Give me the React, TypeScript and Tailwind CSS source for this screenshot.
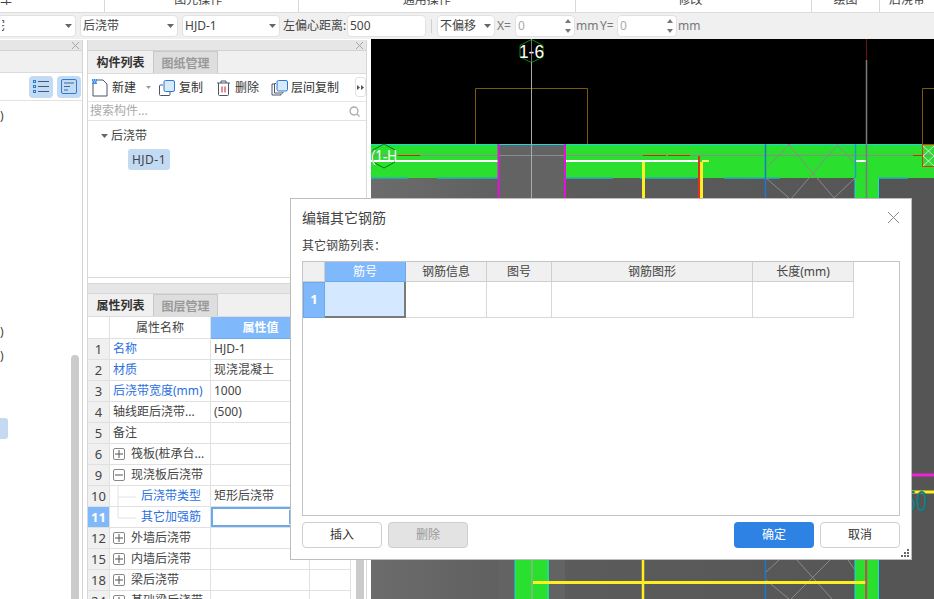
import React from 'react';

const ribbon = [
  { w: 'w-[105px]', label: '车', cls: 'text-left' },
  { w: 'w-[194px]', label: '图元操作 ·', cls: 'text-center' },
  { w: 'w-[277px]', label: '通用操作 ·', cls: 'text-center pr-[14px]' },
  { w: 'w-[236px]', label: '修改   ·', cls: 'text-center' },
  { w: 'w-[68px]', label: '绘图', cls: 'text-center' },
  { w: 'flex-1', label: '后浇带', cls: 'text-center' },
];

function Caret({ className = '' }: { className?: string }) {
  return (
    <svg width="7" height="4" viewBox="0 0 7 4" className={className}>
      <path d="M0 0h7L3.5 4z" fill="#666" />
    </svg>
  );
}

function Select({ w, children, cut }: { w: string; children: React.ReactNode; cut?: boolean }) {
  return (
    <div className={`${w} h-[22px] bg-white border border-[#e2e2e2] ${cut ? 'rounded-r-[4px] border-l-0' : 'rounded-[4px]'} flex items-center justify-between pl-[2px] pr-[3px] shrink-0`}>
      <span className="whitespace-nowrap overflow-hidden">{children}</span>
      <Caret />
    </div>
  );
}

function Spin() {
  return (
    <div className="w-[60px] h-[22px] bg-white border border-[#e2e2e2] rounded-[4px] flex items-center justify-between pl-[2px] pr-[3px] shrink-0">
      <span className="text-[#aaa]">0</span>
      <svg width="6" height="14" viewBox="0 0 6 14">
        <path d="M0 4l3-4 3 4zM0 10l3 4 3-4z" fill="#777" />
      </svg>
    </div>
  );
}

function TopBars() {
  return (
    <>
      <div className="h-[13px] bg-white border-b border-[#dcdcdc] flex overflow-hidden shrink-0">
        {ribbon.map((r, i) => (
          <div key={i} className={`${r.w} ${r.cls} h-[12px] border-r border-[#d8d8d8] overflow-hidden last:border-r-0`}>
            <div className="text-[12px] leading-[12px] mt-[-6px] text-[#444] whitespace-nowrap">{r.label}</div>
          </div>
        ))}
      </div>
      <div className="h-[26px] bg-[#f0f0f0] flex items-center text-[12px] text-[#444] shrink-0">
        <div className="w-[80px] shrink-0 pr-[4px]">
          <Select w="w-[76px]" cut>
            <span className="ml-[-9px]">宅</span>
          </Select>
        </div>
        <Select w="w-[98px]">后浇带</Select>
        <div className="w-[4px] shrink-0" />
        <Select w="w-[98px]">HJD-1</Select>
        <span className="ml-[3px] w-[64px] shrink-0 whitespace-nowrap">左偏心距离:</span>
        <div className="w-[79px] h-[22px] bg-white border border-[#e2e2e2] rounded-[4px] flex items-center shrink-0 pl-[2px]">500</div>
        <div className="w-px h-[14px] bg-[#cfcfcf] ml-[5px] mr-[5px] shrink-0" />
        <Select w="w-[58px]">不偏移</Select>
        <span className="ml-[2px] w-[18px] text-[#777] shrink-0">X=</span>
        <Spin />
        <span className="ml-[1px] w-[24px] text-[#777] shrink-0">mm</span>
        <span className="w-[17px] text-[#777] shrink-0">Y=</span>
        <Spin />
        <span className="ml-[1px] text-[#777]">mm</span>
      </div>
    </>
  );
}

function PanelTabs({ a, b }: { a: string; b: string }) {
  return (
    <div className="h-[23px] flex bg-[#f0f0f0] border-b border-[#dcdcdc] shrink-0 text-[12px] leading-[24px]">
      <div className="w-[65px] text-center font-bold text-[#333]">{a}</div>
      <div className="w-[65px] text-center font-bold text-[#999] bg-[#dedede] border border-[#c8c8c8] border-b-0">{b}</div>
    </div>
  );
}

function CloseBar() {
  return (
    <div className="h-[11px] bg-[#e6e6e6] border-b border-[#d2d2d2] flex justify-end items-center pr-[3px] shrink-0">
      <svg width="7" height="7" viewBox="0 0 7 7">
        <path d="M0 0l7 7M7 0L0 7" stroke="#a5a5a5" strokeWidth="1" />
      </svg>
    </div>
  );
}

function LeftPanel() {
  return (
    <div className="w-[83px] border-r border-[#d4d4d4] shrink-0 relative overflow-hidden">
      <CloseBar />
      <div className="h-[22px] bg-[#f0f0f0] border-b border-[#dcdcdc]" />
      <div className="h-[28px] border-b border-[#e2e2e2] flex justify-end gap-[4px] items-center pr-[1px]">
        <div className="w-[24px] h-[22px] bg-[#c3daf3] rounded-[4px] flex items-center justify-center">
          <svg width="16" height="13" viewBox="0 0 16 13" fill="none">
            <rect x="0.5" y="0.5" width="2" height="2" stroke="#2a7ad6" />
            <rect x="0.5" y="5.5" width="2" height="2" stroke="#2a7ad6" />
            <rect x="0.5" y="10.5" width="2" height="2" stroke="#2a7ad6" />
            <path d="M5 1.5h11M5 6.5h11M5 11.5h11" stroke="#3c5a80" />
          </svg>
        </div>
        <div className="w-[24px] h-[22px] bg-[#c3daf3] rounded-[4px] flex items-center justify-center">
          <svg width="16" height="15" viewBox="0 0 16 15" fill="none">
            <rect x="0.5" y="0.5" width="15" height="14" rx="1.5" stroke="#2a7ad6" />
            <path d="M3 4h10M3 7.5h6M3 11h4" stroke="#3c6a9c" />
          </svg>
        </div>
      </div>
      {/* scrolled content, only the right edge of it shows */}
      <div className="absolute left-0 top-[70px] text-[12px] text-[#444] leading-none">)</div>
      <div className="absolute left-0 top-[286px] text-[12px] text-[#444] leading-none">)</div>
      <div className="absolute left-0 top-[310px] text-[12px] text-[#444] leading-none">)</div>
      <div className="absolute left-0 top-[378px] w-[8px] h-[21px] bg-[#c5daf2] rounded-r-[3px]" />
      <div className="absolute left-[71px] top-[315px] w-[8px] h-[300px] bg-[#cbcbcb] rounded-t-[4px]" />
    </div>
  );
}

function ToolIcon({ kind }: { kind: 'new' | 'copy' | 'trash' | 'floor' }) {
  if (kind === 'new') {
    return (
      <svg width="16" height="18" viewBox="0 0 16 18" fill="none">
        <path d="M1 5v12h14V5l-4-4H5" stroke="#4a5568" strokeWidth="1" />
        <rect x="0" y="0" width="5" height="5" fill="#3f8fe8" />
        <path d="M1 1h1M3 1h1M0 3h1M2 3h1M4 3h1" stroke="#fff" strokeWidth="0.8" />
      </svg>
    );
  }
  if (kind === 'copy') {
    return (
      <svg width="16" height="16" viewBox="0 0 16 16" fill="none">
        <path d="M4 5H1.5A1 1 0 0 0 .5 6v8.500a1 1 0 0 0 1 1H10a1 1 0 0 0 1-1V12" stroke="#4a5568" />
        <rect x="5" y="0.500" width="10.500" height="11" rx="1.500" fill="#d8e9fb" stroke="#2a7ad6" />
      </svg>
    );
  }
  if (kind === 'trash') {
    return (
      <svg width="15" height="16" viewBox="0 0 15 16" fill="none">
        <path d="M1 3h13M5 3V1h5v2" stroke="#4a5568" />
        <path d="M2.500 3v11.500a1 1 0 0 0 1 1h8a1 1 0 0 0 1-1V3" stroke="#4a5568" />
        <path d="M6 6.500v6M9 6.500v6" stroke="#d02020" />
      </svg>
    );
  }
  return (
    <svg width="17" height="16" viewBox="0 0 17 16" fill="none">
      <path d="M3 4H1v11h9v-1M5 3.500H3.500v9.500H12v-1" stroke="#4a5568" />
      <rect x="6" y="0.500" width="10.500" height="10.500" rx="1.500" fill="#d8e9fb" stroke="#2a7ad6" />
    </svg>
  );
}

function ComponentList() {
  return (
    <div className="h-[238px] border-b border-[#d8d8d8] flex flex-col shrink-0">
      <CloseBar />
      <PanelTabs a="构件列表" b="图纸管理" />
      <div className="h-[28px] border-b border-[#e6e6e6] flex items-center text-[12px] text-[#333] shrink-0 relative">
        <div className="ml-[4px] flex items-center gap-[4px] w-[67px]">
          <ToolIcon kind="new" />
          <span>新建</span>
          <svg width="5" height="3" viewBox="0 0 5 3" className="ml-[6px]">
            <path d="M0 0h5L2.500 3z" fill="#999" />
          </svg>
        </div>
        <div className="flex items-center gap-[4px] w-[57px]">
          <ToolIcon kind="copy" />
          <span>复制</span>
        </div>
        <div className="flex items-center gap-[4px] w-[55px]">
          <ToolIcon kind="trash" />
          <span>删除</span>
        </div>
        <div className="flex items-center gap-[3px]">
          <ToolIcon kind="floor" />
          <span>层间复制</span>
        </div>
        <div className="absolute right-0 top-[3px] w-[11px] h-[20px] border border-[#e2e2e2] rounded-[3px] flex items-center justify-center">
          <svg width="7" height="5" viewBox="0 0 7 5">
            <path d="M0 0l3 2.500L0 5zM4 0l3 2.500L4 5z" fill="#555" />
          </svg>
        </div>
      </div>
      <div className="h-[19px] border-b border-[#e2e2e2] flex items-center justify-between pl-[2px] pr-[6px] text-[12px] text-[#aaa] shrink-0">
        <span>搜索构件...</span>
        <svg width="11" height="11" viewBox="0 0 11 11" fill="none">
          <circle cx="5" cy="5" r="4" stroke="#aaa" strokeWidth="1.300" />
          <path d="M8 8l2.500 2.500" stroke="#aaa" strokeWidth="1.300" />
        </svg>
      </div>
      <div className="pl-[13px] pt-[6px] text-[12px] text-[#444]">
        <div className="flex items-center h-[18px] gap-[3px]">
          <Caret />
          <span>后浇带</span>
        </div>
        <div className="ml-[27px] mt-[4px] w-[42px] h-[21px] bg-[#c3daf3] rounded-[3px] flex items-center justify-center tracking-[0.5px]">HJD-1</div>
      </div>
    </div>
  );
}

type Row = { n: number; name: string; value?: string; blue?: boolean; expand?: '+' | '-'; child?: boolean; active?: boolean };

const rows: Row[] = [
  { n: 1, name: '名称', value: 'HJD-1', blue: true },
  { n: 2, name: '材质', value: '现浇混凝土', blue: true },
  { n: 3, name: '后浇带宽度(mm)', value: '1000', blue: true },
  { n: 4, name: '轴线距后浇带...', value: '(500)' },
  { n: 5, name: '备注' },
  { n: 6, name: '筏板(桩承台...', expand: '+' },
  { n: 9, name: '现浇板后浇带', expand: '-' },
  { n: 10, name: '后浇带类型', value: '矩形后浇带', blue: true, child: true },
  { n: 11, name: '其它加强筋', blue: true, child: true, active: true },
  { n: 12, name: '外墙后浇带', expand: '+' },
  { n: 15, name: '内墙后浇带', expand: '+' },
  { n: 18, name: '梁后浇带', expand: '+' },
  { n: 24, name: '基础梁后浇带', expand: '+' },
];

const rowGrid = 'grid grid-cols-[22px_101px_99px_41px] w-[263px]';

function PropRow({ r }: { r: Row }) {
  return (
    <div className={`${rowGrid} h-[21px] border-b border-[#e0e0e0] text-[12px] text-[#444] leading-[20px] shrink-0`}>
      <div className={`text-center border-r border-[#e0e0e0] text-[13px] ${r.active ? 'bg-[#7fb9fb] text-white font-bold' : 'bg-[#f0f0f0]'}`}>{r.n}</div>
      <div className="border-r border-[#e0e0e0] flex items-center pl-[3px] relative whitespace-nowrap overflow-hidden">
        {r.expand && (
          <span className="w-[12px] h-[12px] border border-[#888] rounded-[2px] flex items-center justify-center mr-[6px] shrink-0">
            <svg width="8" height="8" viewBox="0 0 8 8">
              <path d={r.expand === '+' ? 'M0 4h8M4 0v8' : 'M0 4h8'} stroke="#555" />
            </svg>
          </span>
        )}
        {r.child && (
          <svg width="25" height="21" viewBox="0 0 25 21" className="shrink-0 mr-[3px]">
            <path d={r.active ? 'M5 0v11h18' : 'M5 0v21M5 11h18'} stroke="#e2e2e2" fill="none" />
          </svg>
        )}
        <span className={r.blue ? 'text-[#2b6fe0]' : ''}>{r.name}</span>
      </div>
      {r.active ? (
        <div className="border-2 border-[#6aa9ee] bg-white relative">
          <div className="absolute left-[76px] top-[1px] w-[2px] h-[14px] bg-[#6aa9ee]" />
        </div>
      ) : (
        <div className="border-r border-[#e0e0e0] pl-[3px] whitespace-nowrap">{r.value}</div>
      )}
      <div className="border-r border-[#e0e0e0]" />
    </div>
  );
}

function PropertyList() {
  return (
    <div className="flex-1 flex flex-col overflow-hidden mt-[5px] relative">
      <div className="h-[11px] bg-[#e6e6e6] border-y border-[#d8d8d8] shrink-0" />
      <PanelTabs a="属性列表" b="图层管理" />
      <div className={`${rowGrid} h-[22px] border-b border-[#e0e0e0] text-[12px] text-[#444] leading-[21px] shrink-0`}>
        <div className="border-r border-[#e0e0e0]" />
        <div className="border-r border-[#e0e0e0] text-center">属性名称</div>
        <div className="bg-[#7fb9fb] text-white text-center font-bold border-b border-[#6aa9ee]">属性值</div>
        <div />
      </div>
      {rows.map((r) => (
        <PropRow key={r.n} r={r} />
      ))}
      <div className="absolute left-[268px] top-[60px] w-[8px] h-[300px] bg-[#cbcbcb]" />
    </div>
  );
}

function Canvas() {
  return (
    <svg viewBox="371 39 563 560" width="563" height="560" className="block" fontFamily="'Liberation Sans', sans-serif">
      <defs>
        <linearGradient id="floor" x1="0" x2="1" y1="0" y2="0">
          <stop offset="0" stopColor="#6c6c6c" />
          <stop offset="0.3" stopColor="#5c5c5c" />
          <stop offset="1" stopColor="#555" />
        </linearGradient>
      </defs>
      <rect x="371" y="39" width="563" height="105" fill="#000" />
      <rect x="371" y="178" width="563" height="421" fill="url(#floor)" />
      <rect x="371" y="144" width="563" height="34" fill="#2bdf2f" />
      <rect x="498" y="144" width="67" height="455" fill="#636363" />
      <rect x="515" y="560" width="34" height="39" fill="#2bdf2f" />
      <rect x="855" y="178" width="23" height="421" fill="#2bdf2f" />
      <rect x="878" y="178" width="56" height="421" fill="#555" />

      <path d="M475.500 144V88.500H587.500V144M922.500 144V88.500H934" stroke="#7a5a10" fill="none" />
      <path d="M371 144.500H934" stroke="#18d8e8" />
      <path d="M371 155.500H934" stroke="#8a8a8a" />
      <path d="M371 161H498M565 161H700M855 161H867" stroke="#fff" strokeWidth="2" />
      <path d="M398 155.500H420M643 155.500H666M668 155.500H690M913 155.500H922" stroke="#e02010" />
      <path d="M371 178H408M437 178H498M565 178H613M640 178H696M724 178H780M878 178H908" stroke="#1fb8b0" strokeWidth="1.500" />
      <path d="M498.500 144V199M565 144V199" stroke="#e014d8" strokeWidth="2" />
      <path d="M643.500 162V199M701.500 162V199" stroke="#ffee22" strokeWidth="3" />
      <path d="M699 156V199" stroke="#e03020" strokeWidth="2" />
      <path d="M702 161H709" stroke="#ffee66" strokeWidth="2" />
      <path d="M765.500 144V599" stroke="#1a7ad0" strokeWidth="1.500" />
      <path d="M855.500 144V178" stroke="#1aa0c0" strokeWidth="1.500" />
      <path d="M855 178V599M878.500 178V599" stroke="#18d8e8" />
      <path
        d="M788 144L835 199M838 144L791 199M766 168L790 144M838 146L855 163M766 178L789 198M855 178L834 198"
        stroke="#8a8a8a"
        fill="none"
      />
      <path d="M797 560L832 599M830 560L791 599M766 572L779 560M766 580L789 599M848 560L855 570" stroke="#8a8a8a" fill="none" />
      <path d="M866.500 39V60" stroke="#6a1010" />
      <path d="M866.500 60V599" stroke="#7a7a7a" strokeWidth="1.500" />
      <path d="M531.500 39V199" stroke="#aaa" />
      <path d="M531.500 39.500L543 45.500V57L531.500 62.500L520 57V45.500Z" stroke="#0a8a0a" fill="#000" />
      <text x="531.500" y="58" textAnchor="middle" fontSize="19" fill="#fff" textLength="25" lengthAdjust="spacingAndGlyphs">1-6</text>
      <path d="M531.500 39V63" stroke="#aaa" strokeOpacity="0.700" />
      <path d="M384 144L395 150V162L384 168L373 162V150Z" stroke="#0a7a0a" fill="none" />
      <text x="384" y="162" textAnchor="middle" fontSize="17" fill="#fff" textLength="26" lengthAdjust="spacingAndGlyphs">(1-H</text>

      <rect x="922.500" y="144.500" width="12" height="22" fill="none" stroke="#e83010" />
      <path d="M923 146l11 10M934 146l-11 10M923 156l11 10M934 156l-11 10" stroke="#ddd" />

      <path d="M515 560V599M548 560V599" stroke="#18d8e8" />
      <path d="M532 560V599" stroke="#aaa" />
      <path d="M533 582.500H866" stroke="#ffee22" strokeWidth="3" />
      <path d="M643 560V599" stroke="#ffee22" strokeWidth="2.500" />
      <path d="M866 560V599" stroke="#d04040" strokeWidth="1.500" />

      <path d="M912 475H934" stroke="#f020d8" strokeWidth="3" />
      <path d="M912 492H934" stroke="#ffee22" strokeWidth="3" />
      <text x="905" y="511" fontSize="30" fill="#0e7f85" textLength="22" lengthAdjust="spacingAndGlyphs">50</text>
    </svg>
  );
}

const dialogCols = [
  { w: 'w-[81px]', t: '筋号', active: true },
  { w: 'w-[81px]', t: '钢筋信息' },
  { w: 'w-[65px]', t: '图号' },
  { w: 'w-[201px]', t: '钢筋图形' },
  { w: 'w-[101px]', t: '长度(mm)' },
];

function Dialog() {
  return (
    <div className="absolute left-[290px] top-[198px] w-[622px] h-[362px] bg-white border border-[#bdbdbd] text-[#444] flex flex-col px-[11px]">
      <div className="h-[37px] flex items-center justify-between text-[14px] shrink-0">
        <span>编辑其它钢筋</span>
        <svg width="11" height="11" viewBox="0 0 11 11" className="mr-[1px]">
          <path d="M0 0l11 11M11 0L0 11" stroke="#888" />
        </svg>
      </div>
      <div className="h-[25px] text-[12px] leading-[20px] shrink-0">其它钢筋列表：</div>
      <div className="h-[255px] border border-[#c4c4c4] shrink-0 w-[598px]">
        <div className="flex h-[20px] text-[12px] leading-[19px]">
          <div className="w-[22px] bg-[#f0f0f0] border-r border-b border-[#cfcfcf]" />
          {dialogCols.map((c) => (
            <div
              key={c.t}
              className={`${c.w} text-center border-r border-b ${c.active ? 'bg-[#7fb9fb] text-white border-[#6aa9ee]' : 'bg-[#f0f0f0] border-[#cfcfcf]'}`}
            >
              {c.t}
            </div>
          ))}
        </div>
        <div className="flex h-[36px]">
          <div className="w-[22px] bg-[#7fb9fb] border border-[#6aa9ee] text-white text-[13px] font-bold flex items-center justify-center">1</div>
          {dialogCols.map((c) =>
            c.active ? (
              <div key={c.t} className={`${c.w} bg-[#d4e9ff] border-r-2 border-b-2 border-[#7a7a7a]`} />
            ) : (
              <div key={c.t} className={`${c.w} border-r border-b border-[#d8d8d8]`} />
            ),
          )}
        </div>
      </div>
      <div className="flex items-center mt-[6px] gap-[6px] text-[12px]">
        <button className="w-[80px] h-[26px] border border-[#cfcfcf] rounded-[4px] bg-white text-[#333]">插入</button>
        <button className="w-[80px] h-[26px] border border-[#cfcfcf] rounded-[4px] bg-[#e3e3e3] text-[#999]">删除</button>
        <button className="w-[80px] h-[26px] rounded-[4px] bg-[#2e82e4] text-white ml-auto">确定</button>
        <button className="w-[80px] h-[26px] border border-[#cfcfcf] rounded-[4px] bg-white text-[#333]">取消</button>
      </div>
      <svg width="8" height="8" viewBox="0 0 8 8" className="absolute right-[2px] bottom-[2px]">
        <path d="M6 0h2v2H6zM3 3h2v2H3zM6 3h2v2H6zM0 6h2v2H0zM3 6h2v2H3zM6 6h2v2H6z" fill="#666" />
      </svg>
    </div>
  );
}

export default function App() {
  return (
    <div className="w-[934px] h-[599px] overflow-hidden relative bg-white flex flex-col font-['Noto_Sans','Noto_Sans_CJK_SC',sans-serif]">
      <TopBars />
      <div className="flex flex-1 min-h-0 pt-px">
        <LeftPanel />
        <div className="w-[4px] shrink-0" />
        <div className="w-[280px] shrink-0 border-x border-[#d8d8d8] flex flex-col overflow-hidden">
          <ComponentList />
          <PropertyList />
        </div>
        <div className="w-[4px] shrink-0" />
        <div className="flex-1 overflow-hidden mt-[-1px]">
          <Canvas />
        </div>
      </div>
      <Dialog />
    </div>
  );
}
